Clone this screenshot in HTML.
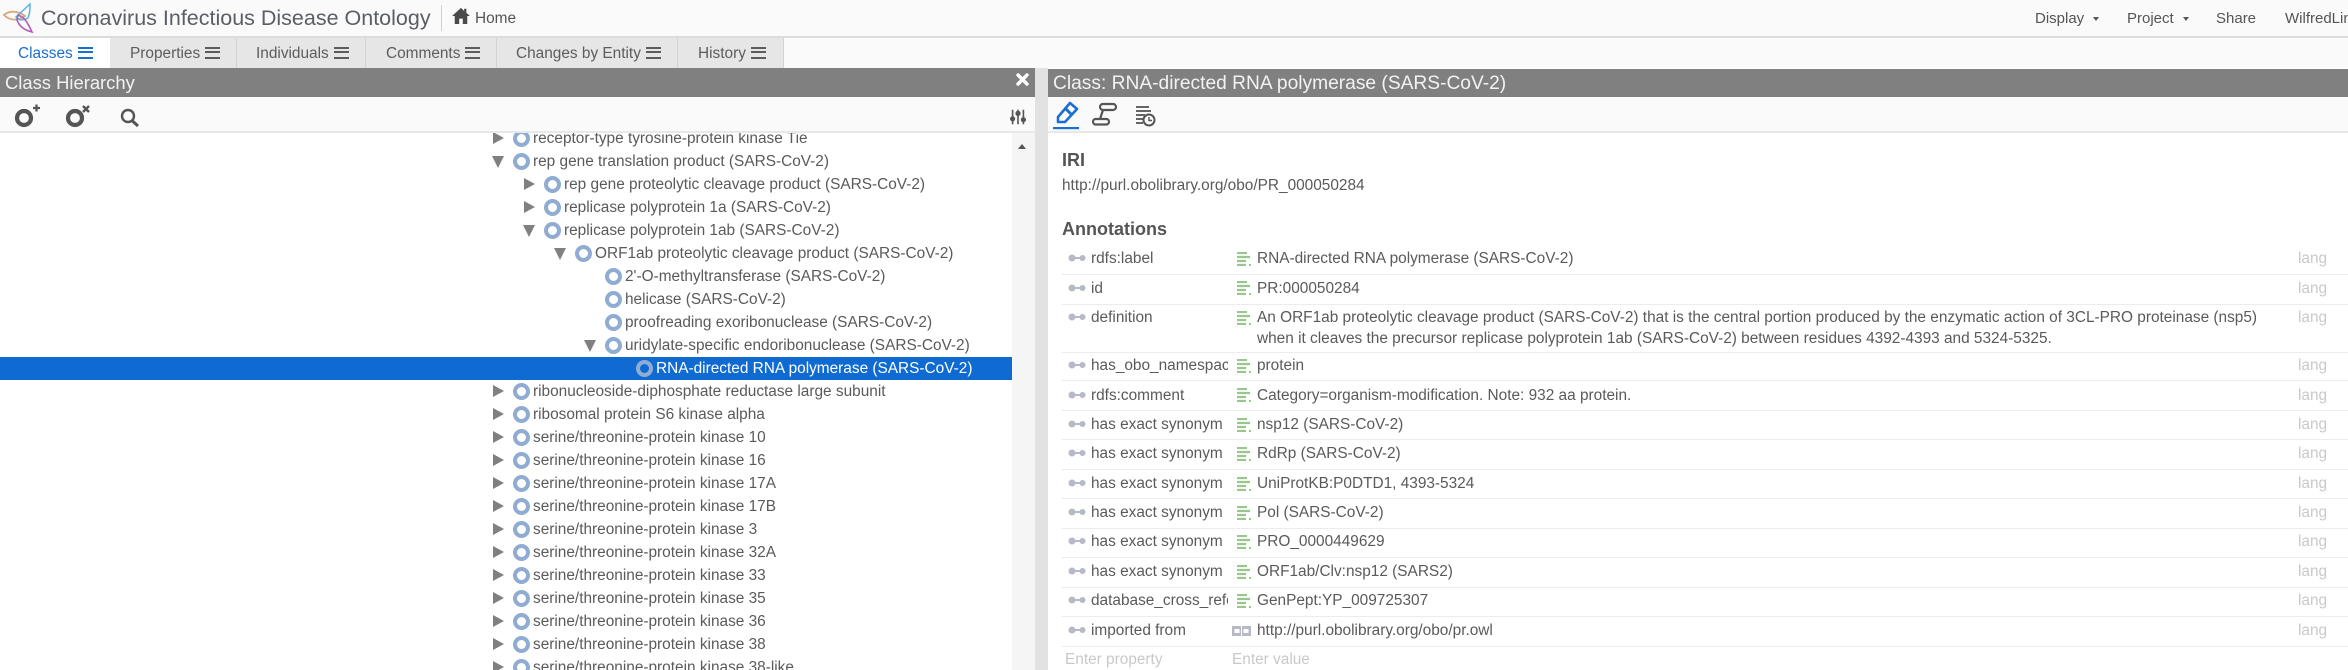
<!DOCTYPE html>
<html><head><meta charset="utf-8"><title>Coronavirus Infectious Disease Ontology</title>
<style>
html,body{margin:0;padding:0;width:2348px;height:670px;overflow:hidden;background:#fff}
body{font-family:"Liberation Sans",sans-serif;font-size:15px;color:#555;position:relative;filter:blur(.3px)}
.a{position:absolute;white-space:nowrap}
.bar{position:absolute;background:#808080}
.tab{position:absolute;top:38px;height:30px;line-height:32px;background:#e6e6e6;border-right:1px solid #d4d4d4;box-sizing:border-box;text-align:left;font-size:15.4px;color:#5c5c5c}
.tab i{display:inline-block;width:15px;height:12px;margin-left:5px;vertical-align:-1px;border-top:2.5px solid currentColor;border-bottom:2.5px solid currentColor;box-sizing:border-box;position:relative}
.tab i:after{content:"";position:absolute;left:0;right:0;top:1.9px;height:2.5px;background:currentColor}
#tree{position:absolute;left:0;top:133px;width:1012px;height:537px;overflow:hidden;background:#fff}
.r{position:absolute;height:23px;line-height:23px;white-space:nowrap;font-size:15.4px;color:#5a5a5a}
.r:before{content:"";position:absolute;left:-20px;top:3px;width:9px;height:9px;border:4px solid #90acd2;border-radius:50%}
.c:after{content:"";position:absolute;left:-40px;top:5px;border-left:11px solid #808080;border-top:6.5px solid transparent;border-bottom:6.5px solid transparent}
.o:after{content:"";position:absolute;left:-41px;top:6px;border-top:12px solid #808080;border-left:6.5px solid transparent;border-right:6.5px solid transparent}
.l{position:absolute;left:1062px;right:0;height:1px;background:#ececec}
.k{position:absolute;left:1091px;width:137px;overflow:hidden;white-space:nowrap;font-size:15.4px;color:#5a5a5a;line-height:20px;margin-top:1px}
.p{position:absolute;left:1068px;width:18px;height:8px}
.v{position:absolute;left:1257px;white-space:nowrap;font-size:15.4px;color:#5a5a5a;line-height:20px;margin-top:1px}
.g{position:absolute;left:1237px;width:14px;height:14px}
.la{position:absolute;left:2298px;font-size:15.4px;color:#c9c9c9;line-height:20px;margin-top:1px}
.ph{color:#c9c9c9;font-size:15.4px;margin-top:1px}
</style></head><body>

<div class="a" style="left:0;top:0;width:2348px;height:38px;background:#fafafa;border-bottom:2px solid #dcdcdc;box-sizing:border-box"></div>
<svg class="a" style="left:2px;top:2px" width="34" height="32" viewBox="0 0 34 32" fill="none" stroke-width="1.4">
<path d="M2 13C8 8 16 9 23 14C16 19 8 19 2 13Z" stroke="#d9a878" stroke-width="1.8"/>
<path d="M28 2L14 15C16 18 20 19 26 16C28 11 28 7 28 2Z" stroke="#58b6de" stroke-width="1.5"/>
<path d="M16 13C22 15 25 19 30 30C22 28 17 24 15 18Z" stroke="#b05cb8" stroke-width="1.6"/>
</svg>
<div class="a" style="left:41px;top:4px;font-size:21.5px;line-height:28px;color:#5a5f66">Coronavirus Infectious Disease Ontology</div>
<div class="a" style="left:441px;top:5px;width:1px;height:26px;background:#d0d0d0"></div>
<svg class="a" style="left:452px;top:7px" width="18" height="17" viewBox="0 0 20 19"><path d="M10 1L0 10H3V19H8V13H12V19H17V10H20L16 6.500V2H13.500V4.500Z" fill="#4a4a4a"/></svg>
<div class="a" style="left:475px;top:10px;font-size:15.4px;line-height:18px;color:#555">Home</div>
<div class="a" style="left:2035px;top:10px;line-height:18px">Display</div>
<div class="a" style="left:2093px;top:17px;border-top:4px solid #555;border-left:3px solid transparent;border-right:3px solid transparent"></div>
<div class="a" style="left:2127px;top:10px;line-height:18px">Project</div>
<div class="a" style="left:2183px;top:17px;border-top:4px solid #555;border-left:3px solid transparent;border-right:3px solid transparent"></div>
<div class="a" style="left:2216px;top:10px;line-height:18px">Share</div>
<div class="a" style="left:2285px;top:10px;line-height:18px">WilfredLin</div>

<div class="a" style="left:0;top:38px;width:2348px;height:30px;background:#fafafa"></div>
<div class="tab" style="left:0;width:110px;padding-left:18px;background:#fff;color:#1a6fd0;border:0">Classes<i></i></div>
<div class="tab" style="left:110px;width:127px;padding-left:20px">Properties<i></i></div>
<div class="tab" style="left:237px;width:129px;padding-left:19px">Individuals<i></i></div>
<div class="tab" style="left:366px;width:131px;padding-left:20px">Comments<i></i></div>
<div class="tab" style="left:497px;width:181px;padding-left:19px">Changes by Entity<i></i></div>
<div class="tab" style="left:678px;width:106px;padding-left:20px">History<i></i></div>

<div class="a" style="left:0;top:97px;width:2348px;height:36px;background:#fafafa;border-bottom:2px solid #e8e8e8;box-sizing:border-box"></div>
<div class="bar" style="left:0;top:68px;width:1035px;height:29px"></div>
<div class="a" style="left:5px;top:72px;font-size:18.4px;line-height:22px;color:#f2f2f2">Class Hierarchy</div>
<svg class="a" style="left:1015px;top:72px" width="15" height="15" viewBox="0 0 15 15"><path d="M3 3L12 12M12 3L3 12" stroke="#fff" stroke-width="3.400" stroke-linecap="round"/></svg>
<div class="a" style="left:1035px;top:68px;width:13px;height:602px;background:#e2e2e2"></div>
<div class="bar" style="left:1048px;top:69px;width:1300px;height:28px"></div>
<div class="a" style="left:1053px;top:73px;font-size:19.2px;line-height:22px;color:#f2f2f2">Class: RNA-directed RNA polymerase (SARS-CoV-2)</div>

<svg class="a" style="left:0;top:97px" width="160" height="36" viewBox="0 0 160 36" fill="none" stroke="#555">
<circle cx="24" cy="21" r="7" stroke-width="4.200"/><path d="M33 11H40M36.500 7.500V14.500" stroke-width="2.200"/>
<circle cx="75" cy="21" r="7" stroke-width="4.200"/><path d="M83 9L89 15M89 9L83 15" stroke-width="2.400"/>
<circle cx="128" cy="19" r="6" stroke-width="2.400"/><path d="M132.500 24L138 29" stroke-width="3"/>
</svg>
<svg class="a" style="left:1008px;top:108px" width="20" height="18" viewBox="0 0 20 20" fill="#555" stroke="#555">
<path d="M4 2V18M10 2V18M16 2V18" stroke-width="1.800"/><circle cx="4" cy="12" r="2.400"/><circle cx="10" cy="6" r="2.400"/><circle cx="16" cy="13" r="2.400"/></svg>

<svg class="a" style="left:1053px;top:99px" width="120" height="34" viewBox="0 0 120 34" fill="none">
<path d="M5 18L17 4L24 10L12 23H5Z" stroke="#1a6fd0" stroke-width="2.600" stroke-linejoin="round"/><path d="M12 9L19 16" stroke="#1a6fd0" stroke-width="3"/>
<rect x="0" y="28" width="26" height="2.200" fill="#1a6fd0"/>
<rect x="47" y="5" width="16" height="6" rx="3" stroke="#555" stroke-width="2.200"/>
<rect x="40" y="20" width="16" height="5.500" rx="2.700" stroke="#555" stroke-width="2.200"/>
<path d="M50 11L47 20" stroke="#555" stroke-width="2.200"/>
<path d="M83 8H96M83 12H98M83 16H92M83 20H90M83 24H90" stroke="#666" stroke-width="2"/>
<circle cx="96" cy="21" r="5.500" stroke="#555" stroke-width="2" fill="#fafafa"/><path d="M96 18V21.500H99" stroke="#555" stroke-width="1.400"/>
</svg>

<div id="tree">
<div class="a" style="left:0;top:224px;width:1012px;height:23px;background:#0f6bd2"></div>
<div class="r c" style="left:533px;top:-6px">receptor-type tyrosine-protein kinase Tie</div>
<div class="r o" style="left:533px;top:17px">rep gene translation product (SARS-CoV-2)</div>
<div class="r c" style="left:564px;top:40px">rep gene proteolytic cleavage product (SARS-CoV-2)</div>
<div class="r c" style="left:564px;top:63px">replicase polyprotein 1a (SARS-CoV-2)</div>
<div class="r o" style="left:564px;top:86px">replicase polyprotein 1ab (SARS-CoV-2)</div>
<div class="r o" style="left:595px;top:109px">ORF1ab proteolytic cleavage product (SARS-CoV-2)</div>
<div class="r" style="left:625px;top:132px">2'-O-methyltransferase (SARS-CoV-2)</div>
<div class="r" style="left:625px;top:155px">helicase (SARS-CoV-2)</div>
<div class="r" style="left:625px;top:178px">proofreading exoribonuclease (SARS-CoV-2)</div>
<div class="r o" style="left:625px;top:201px">uridylate-specific endoribonuclease (SARS-CoV-2)</div>
<div class="r" style="left:656px;top:224px;color:#fff">RNA-directed RNA polymerase (SARS-CoV-2)</div>
<div class="r c" style="left:533px;top:247px">ribonucleoside-diphosphate reductase large subunit</div>
<div class="r c" style="left:533px;top:270px">ribosomal protein S6 kinase alpha</div>
<div class="r c" style="left:533px;top:293px">serine/threonine-protein kinase 10</div>
<div class="r c" style="left:533px;top:316px">serine/threonine-protein kinase 16</div>
<div class="r c" style="left:533px;top:339px">serine/threonine-protein kinase 17A</div>
<div class="r c" style="left:533px;top:362px">serine/threonine-protein kinase 17B</div>
<div class="r c" style="left:533px;top:385px">serine/threonine-protein kinase 3</div>
<div class="r c" style="left:533px;top:408px">serine/threonine-protein kinase 32A</div>
<div class="r c" style="left:533px;top:431px">serine/threonine-protein kinase 33</div>
<div class="r c" style="left:533px;top:454px">serine/threonine-protein kinase 35</div>
<div class="r c" style="left:533px;top:477px">serine/threonine-protein kinase 36</div>
<div class="r c" style="left:533px;top:500px">serine/threonine-protein kinase 38</div>
<div class="r c" style="left:533px;top:523px">serine/threonine-protein kinase 38-like</div>
</div>
<div class="a" style="left:1012px;top:133px;width:23px;height:537px;background:#f5f5f5"></div>
<div class="a" style="left:1018px;top:144px;border-bottom:5px solid #555;border-left:4.500px solid transparent;border-right:4.500px solid transparent"></div>

<div class="a" style="left:1062px;top:150px;font-size:18px;font-weight:bold;line-height:20px;color:#555">IRI</div>
<div class="a" style="left:1062px;top:176px;font-size:15.4px;line-height:20px;color:#5a5a5a">http://purl.obolibrary.org/obo/PR_000050284</div>
<div class="a" style="left:1062px;top:219px;font-size:18px;font-weight:bold;line-height:20px;color:#555">Annotations</div>

<div class="l" style="top:274px"></div><div class="l" style="top:304px"></div><div class="l" style="top:352px"></div><div class="l" style="top:380px"></div><div class="l" style="top:410px"></div><div class="l" style="top:439px"></div><div class="l" style="top:469px"></div><div class="l" style="top:498px"></div><div class="l" style="top:528px"></div><div class="l" style="top:557px"></div><div class="l" style="top:587px"></div><div class="l" style="top:616px"></div><div class="l" style="top:646px"></div>

<svg width="0" height="0" style="position:absolute"><defs>
<g id="pr"><circle cx="4" cy="4" r="3.500" fill="#b5bac6"/><circle cx="14.500" cy="4" r="3" fill="#b5bac6"/><rect x="4" y="3" width="10" height="2" fill="#b5bac6"/></g>
<g id="gl"><path d="M0 1H10M0 5H13M0 9H9M0 13H9" stroke="#98c68c" stroke-width="2.200" fill="none"/><rect x="12" y="12" width="2" height="2" fill="#98c68c"/></g>
</defs></svg>

<svg class="p" style="top:254px"><use href="#pr"/></svg><div class="k" style="top:248px">rdfs:label</div><svg class="g" style="top:252px"><use href="#gl"/></svg><div class="v" style="top:248px">RNA-directed RNA polymerase (SARS-CoV-2)</div><div class="la" style="top:248px">lang</div>
<svg class="p" style="top:284px"><use href="#pr"/></svg><div class="k" style="top:278px">id</div><svg class="g" style="top:281px"><use href="#gl"/></svg><div class="v" style="top:278px">PR:000050284</div><div class="la" style="top:278px">lang</div>
<svg class="p" style="top:313px"><use href="#pr"/></svg><div class="k" style="top:307px">definition</div><svg class="g" style="top:311px"><use href="#gl"/></svg><div class="v" style="top:307px">An ORF1ab proteolytic cleavage product (SARS-CoV-2) that is the central portion produced by the enzymatic action of 3CL-PRO proteinase (nsp5)</div><div class="v" style="top:328px">when it cleaves the precursor replicase polyprotein 1ab (SARS-CoV-2) between residues 4392-4393 and 5324-5325.</div><div class="la" style="top:307px">lang</div>
<svg class="p" style="top:361px"><use href="#pr"/></svg><div class="k" style="top:355px">has_obo_namespace</div><svg class="g" style="top:359px"><use href="#gl"/></svg><div class="v" style="top:355px">protein</div><div class="la" style="top:355px">lang</div>
<svg class="p" style="top:391px"><use href="#pr"/></svg><div class="k" style="top:385px">rdfs:comment</div><svg class="g" style="top:388px"><use href="#gl"/></svg><div class="v" style="top:385px">Category=organism-modification. Note: 932 aa protein.</div><div class="la" style="top:385px">lang</div>
<svg class="p" style="top:420px"><use href="#pr"/></svg><div class="k" style="top:414px">has exact synonym</div><svg class="g" style="top:418px"><use href="#gl"/></svg><div class="v" style="top:414px">nsp12 (SARS-CoV-2)</div><div class="la" style="top:414px">lang</div>
<svg class="p" style="top:449px"><use href="#pr"/></svg><div class="k" style="top:443px">has exact synonym</div><svg class="g" style="top:447px"><use href="#gl"/></svg><div class="v" style="top:443px">RdRp (SARS-CoV-2)</div><div class="la" style="top:443px">lang</div>
<svg class="p" style="top:479px"><use href="#pr"/></svg><div class="k" style="top:473px">has exact synonym</div><svg class="g" style="top:477px"><use href="#gl"/></svg><div class="v" style="top:473px">UniProtKB:P0DTD1, 4393-5324</div><div class="la" style="top:473px">lang</div>
<svg class="p" style="top:508px"><use href="#pr"/></svg><div class="k" style="top:502px">has exact synonym</div><svg class="g" style="top:506px"><use href="#gl"/></svg><div class="v" style="top:502px">Pol (SARS-CoV-2)</div><div class="la" style="top:502px">lang</div>
<svg class="p" style="top:537px"><use href="#pr"/></svg><div class="k" style="top:531px">has exact synonym</div><svg class="g" style="top:535px"><use href="#gl"/></svg><div class="v" style="top:531px">PRO_0000449629</div><div class="la" style="top:531px">lang</div>
<svg class="p" style="top:567px"><use href="#pr"/></svg><div class="k" style="top:561px">has exact synonym</div><svg class="g" style="top:565px"><use href="#gl"/></svg><div class="v" style="top:561px">ORF1ab/Clv:nsp12 (SARS2)</div><div class="la" style="top:561px">lang</div>
<svg class="p" style="top:596px"><use href="#pr"/></svg><div class="k" style="top:590px">database_cross_reference</div><svg class="g" style="top:594px"><use href="#gl"/></svg><div class="v" style="top:590px">GenPept:YP_009725307</div><div class="la" style="top:590px">lang</div>
<svg class="p" style="top:626px"><use href="#pr"/></svg><div class="k" style="top:620px">imported from</div>
<svg class="a" style="left:1232px;top:626px" width="20" height="10" viewBox="0 0 20 10"><rect width="9" height="10" fill="#b5bac6"/><rect x="10" width="9" height="10" fill="#b5bac6"/><rect x="2.500" y="3" width="5" height="4" fill="#fff"/><rect x="11.500" y="3" width="5" height="4" fill="#fff"/></svg>
<div class="v" style="top:620px">http://purl.obolibrary.org/obo/pr.owl</div><div class="la" style="top:620px">lang</div>
<div class="a ph" style="left:1065px;top:649px;line-height:20px">Enter property</div>
<div class="a ph" style="left:1232px;top:649px;line-height:20px">Enter value</div>
</body></html>
